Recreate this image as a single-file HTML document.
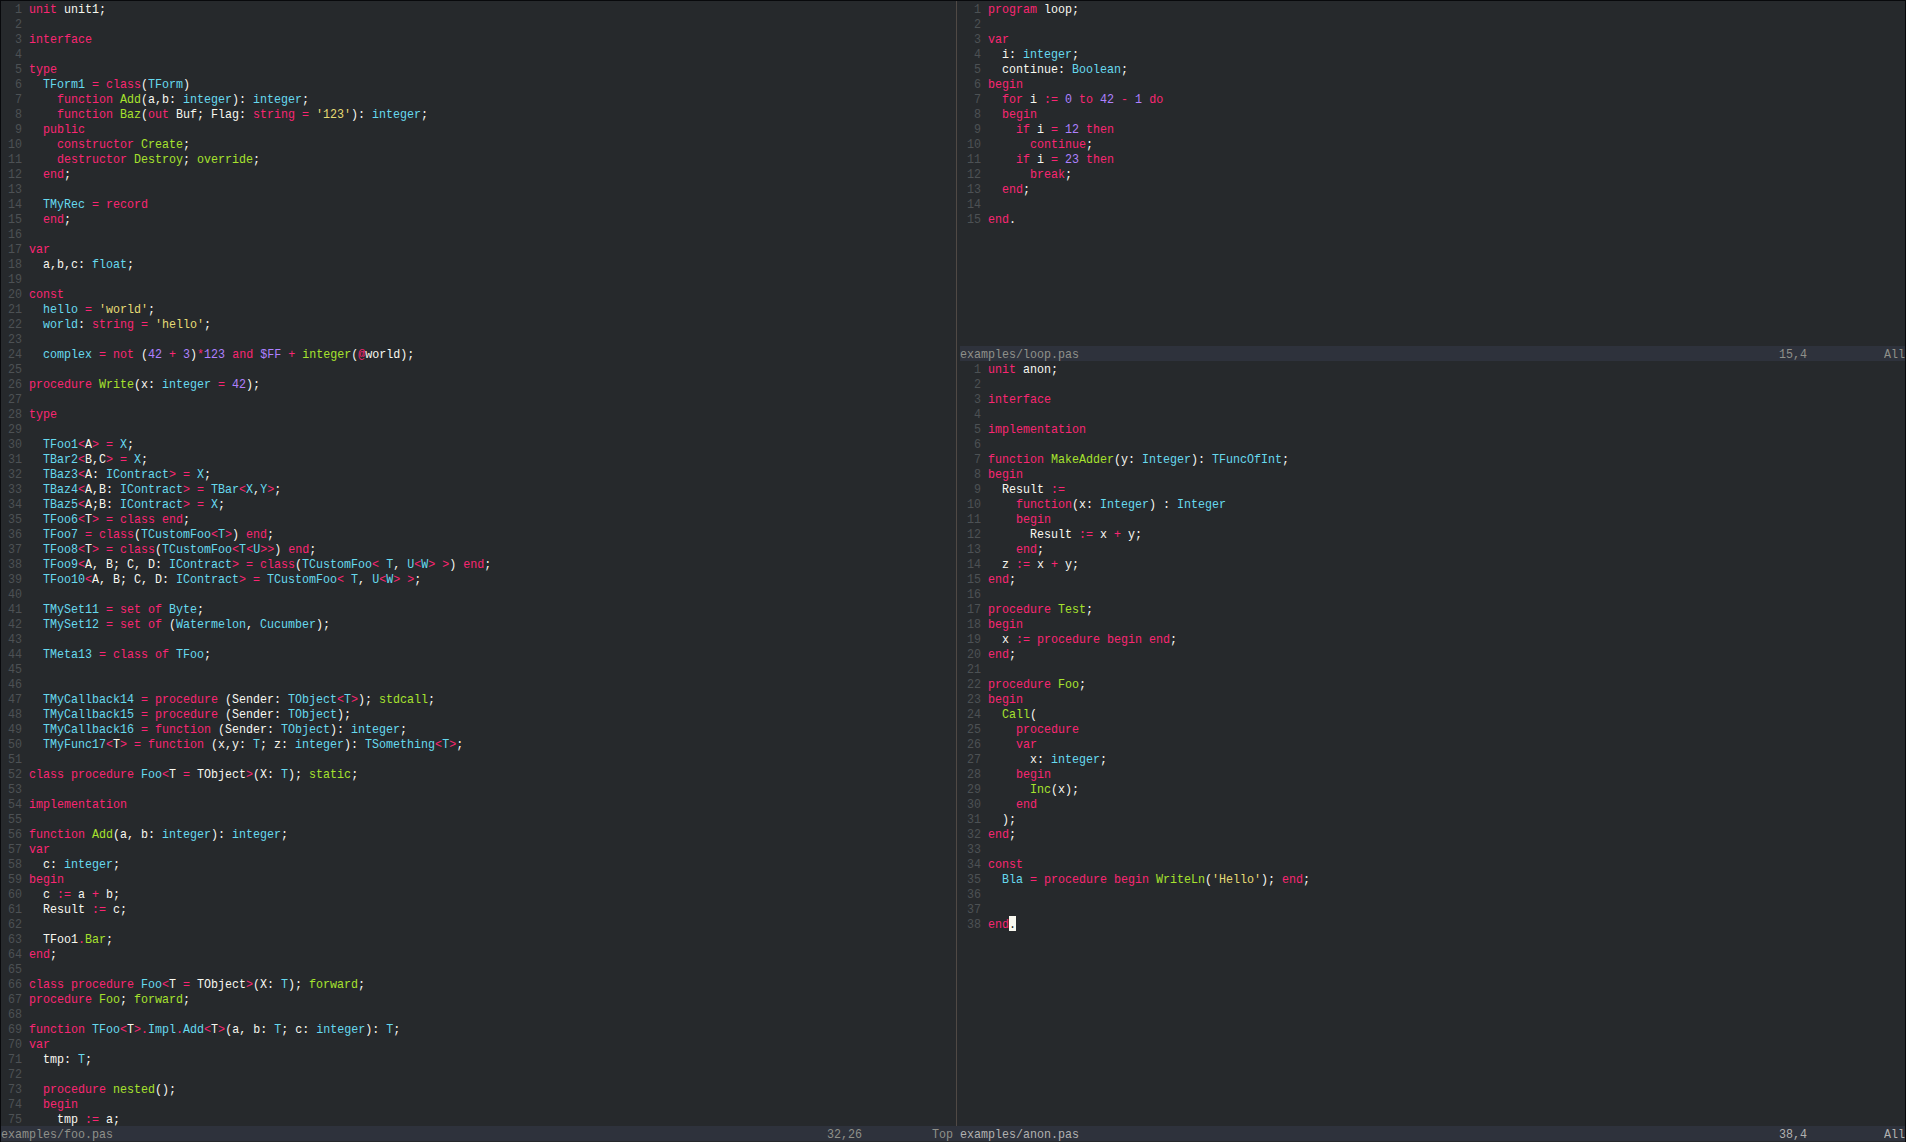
<!DOCTYPE html><html><head><meta charset="utf-8"><style>
html,body{margin:0;padding:0;}
body{width:1906px;height:1142px;background:#08090c;position:relative;overflow:hidden;}
#ed{position:absolute;left:1px;top:1px;width:1904px;height:1141px;background:#26292c;}
.blk{position:absolute;white-space:pre;font-family:"Liberation Mono",monospace;font-size:13.0px;line-height:15px;letter-spacing:0.0px;color:#f8f8f0;transform:scaleX(0.8972898541653627);transform-origin:0 0;}
.blk>*{font-style:normal;}
g{color:#4d5154;}
k{color:#f92672;} t{color:#66d9ef;} f{color:#a6e22e;} y{color:#e6db74;} n{color:#ae81ff;}
c{color:#26292c;}
.cur{position:absolute;left:1009px;top:916px;width:7px;height:15px;background:#f8f8f0;}
.sl{position:absolute;height:15px;background:#2e323c;}
.vs{position:absolute;left:956px;top:1px;width:1px;height:1125px;background:#504945;}
</style></head><body><div id="ed"></div>
<div class="vs"></div>
<div class="sl" style="left:1px;top:1126px;width:959px"></div>
<div class="sl" style="left:960px;top:1126px;width:945px"></div>
<div class="sl" style="left:960px;top:346px;width:945px"></div>
<div class="cur"></div>
<div class="blk" style="left:1px;top:2.0px"><g>  1 </g><k>unit</k> unit1;
<g>  2 </g>
<g>  3 </g><k>interface</k>
<g>  4 </g>
<g>  5 </g><k>type</k>
<g>  6 </g>  <t>TForm1</t> <k>=</k> <k>class</k>(<t>TForm</t>)
<g>  7 </g>    <k>function</k> <f>Add</f>(a,b: <t>integer</t>): <t>integer</t>;
<g>  8 </g>    <k>function</k> <f>Baz</f>(<k>out</k> Buf; Flag: <k>string</k> <k>=</k> <y>&#x27;123&#x27;</y>): <t>integer</t>;
<g>  9 </g>  <k>public</k>
<g> 10 </g>    <k>constructor</k> <f>Create</f>;
<g> 11 </g>    <k>destructor</k> <f>Destroy</f>; <f>override</f>;
<g> 12 </g>  <k>end</k>;
<g> 13 </g>
<g> 14 </g>  <t>TMyRec</t> <k>=</k> <k>record</k>
<g> 15 </g>  <k>end</k>;
<g> 16 </g>
<g> 17 </g><k>var</k>
<g> 18 </g>  a,b,c: <t>float</t>;
<g> 19 </g>
<g> 20 </g><k>const</k>
<g> 21 </g>  <t>hello</t> <k>=</k> <y>&#x27;world&#x27;</y>;
<g> 22 </g>  <t>world</t>: <k>string</k> <k>=</k> <y>&#x27;hello&#x27;</y>;
<g> 23 </g>
<g> 24 </g>  <t>complex</t> <k>=</k> <k>not</k> (<n>42</n> <k>+</k> <n>3</n>)<k>*</k><n>123</n> <k>and</k> <n>$FF</n> <k>+</k> <f>integer</f>(<k>@</k>world);
<g> 25 </g>
<g> 26 </g><k>procedure</k> <f>Write</f>(x: <t>integer</t> <k>=</k> <n>42</n>);
<g> 27 </g>
<g> 28 </g><k>type</k>
<g> 29 </g>
<g> 30 </g>  <t>TFoo1</t><k>&lt;</k>A<k>&gt;</k> <k>=</k> <t>X</t>;
<g> 31 </g>  <t>TBar2</t><k>&lt;</k>B,C<k>&gt;</k> <k>=</k> <t>X</t>;
<g> 32 </g>  <t>TBaz3</t><k>&lt;</k>A: <t>IContract</t><k>&gt;</k> <k>=</k> <t>X</t>;
<g> 33 </g>  <t>TBaz4</t><k>&lt;</k>A,B: <t>IContract</t><k>&gt;</k> <k>=</k> <t>TBar</t><k>&lt;</k><t>X</t>,<t>Y</t><k>&gt;</k>;
<g> 34 </g>  <t>TBaz5</t><k>&lt;</k>A;B: <t>IContract</t><k>&gt;</k> <k>=</k> <t>X</t>;
<g> 35 </g>  <t>TFoo6</t><k>&lt;</k>T<k>&gt;</k> <k>=</k> <k>class</k> <k>end</k>;
<g> 36 </g>  <t>TFoo7</t> <k>=</k> <k>class</k>(<t>TCustomFoo</t><k>&lt;</k><t>T</t><k>&gt;</k>) <k>end</k>;
<g> 37 </g>  <t>TFoo8</t><k>&lt;</k>T<k>&gt;</k> <k>=</k> <k>class</k>(<t>TCustomFoo</t><k>&lt;</k><t>T</t><k>&lt;</k><t>U</t><k>&gt;&gt;</k>) <k>end</k>;
<g> 38 </g>  <t>TFoo9</t><k>&lt;</k>A, B; C, D: <t>IContract</t><k>&gt;</k> <k>=</k> <k>class</k>(<t>TCustomFoo</t><k>&lt;</k> <t>T</t>, <t>U</t><k>&lt;</k><t>W</t><k>&gt;</k> <k>&gt;</k>) <k>end</k>;
<g> 39 </g>  <t>TFoo10</t><k>&lt;</k>A, B; C, D: <t>IContract</t><k>&gt;</k> <k>=</k> <t>TCustomFoo</t><k>&lt;</k> <t>T</t>, <t>U</t><k>&lt;</k><t>W</t><k>&gt;</k> <k>&gt;</k>;
<g> 40 </g>
<g> 41 </g>  <t>TMySet11</t> <k>=</k> <k>set</k> <k>of</k> <t>Byte</t>;
<g> 42 </g>  <t>TMySet12</t> <k>=</k> <k>set</k> <k>of</k> (<t>Watermelon</t>, <t>Cucumber</t>);
<g> 43 </g>
<g> 44 </g>  <t>TMeta13</t> <k>=</k> <k>class</k> <k>of</k> <t>TFoo</t>;
<g> 45 </g>
<g> 46 </g>
<g> 47 </g>  <t>TMyCallback14</t> <k>=</k> <k>procedure</k> (Sender: <t>TObject</t><k>&lt;</k><t>T</t><k>&gt;</k>); <f>stdcall</f>;
<g> 48 </g>  <t>TMyCallback15</t> <k>=</k> <k>procedure</k> (Sender: <t>TObject</t>);
<g> 49 </g>  <t>TMyCallback16</t> <k>=</k> <k>function</k> (Sender: <t>TObject</t>): <t>integer</t>;
<g> 50 </g>  <t>TMyFunc17</t><k>&lt;</k>T<k>&gt;</k> <k>=</k> <k>function</k> (x,y: <t>T</t>; z: <t>integer</t>): <t>TSomething</t><k>&lt;</k><t>T</t><k>&gt;</k>;
<g> 51 </g>
<g> 52 </g><k>class</k> <k>procedure</k> <t>Foo</t><k>&lt;</k>T <k>=</k> TObject<k>&gt;</k>(X: <t>T</t>); <f>static</f>;
<g> 53 </g>
<g> 54 </g><k>implementation</k>
<g> 55 </g>
<g> 56 </g><k>function</k> <f>Add</f>(a, b: <t>integer</t>): <t>integer</t>;
<g> 57 </g><k>var</k>
<g> 58 </g>  c: <t>integer</t>;
<g> 59 </g><k>begin</k>
<g> 60 </g>  c <k>:=</k> a <k>+</k> b;
<g> 61 </g>  Result <k>:=</k> c;
<g> 62 </g>
<g> 63 </g>  TFoo1<k>.</k><f>Bar</f>;
<g> 64 </g><k>end</k>;
<g> 65 </g>
<g> 66 </g><k>class</k> <k>procedure</k> <t>Foo</t><k>&lt;</k>T <k>=</k> TObject<k>&gt;</k>(X: <t>T</t>); <f>forward</f>;
<g> 67 </g><k>procedure</k> <f>Foo</f>; <f>forward</f>;
<g> 68 </g>
<g> 69 </g><k>function</k> <t>TFoo</t><k>&lt;</k>T<k>&gt;.</k><t>Impl</t><k>.</k><t>Add</t><k>&lt;</k>T<k>&gt;</k>(a, b: <t>T</t>; c: <t>integer</t>): <t>T</t>;
<g> 70 </g><k>var</k>
<g> 71 </g>  tmp: <t>T</t>;
<g> 72 </g>
<g> 73 </g>  <k>procedure</k> <f>nested</f>();
<g> 74 </g>  <k>begin</k>
<g> 75 </g>    tmp <k>:=</k> a;</div>
<div class="blk" style="left:960px;top:2.0px"><g>  1 </g><k>program</k> loop;
<g>  2 </g>
<g>  3 </g><k>var</k>
<g>  4 </g>  i: <t>integer</t>;
<g>  5 </g>  continue: <t>Boolean</t>;
<g>  6 </g><k>begin</k>
<g>  7 </g>  <k>for</k> i <k>:=</k> <n>0</n> <k>to</k> <n>42</n> <k>-</k> <n>1</n> <k>do</k>
<g>  8 </g>  <k>begin</k>
<g>  9 </g>    <k>if</k> i <k>=</k> <n>12</n> <k>then</k>
<g> 10 </g>      <k>continue</k>;
<g> 11 </g>    <k>if</k> i <k>=</k> <n>23</n> <k>then</k>
<g> 12 </g>      <k>break</k>;
<g> 13 </g>  <k>end</k>;
<g> 14 </g>
<g> 15 </g><k>end</k>.</div>
<div class="blk" style="left:960px;top:362.0px"><g>  1 </g><k>unit</k> anon;
<g>  2 </g>
<g>  3 </g><k>interface</k>
<g>  4 </g>
<g>  5 </g><k>implementation</k>
<g>  6 </g>
<g>  7 </g><k>function</k> <f>MakeAdder</f>(y: <t>Integer</t>): <t>TFuncOfInt</t>;
<g>  8 </g><k>begin</k>
<g>  9 </g>  Result <k>:=</k>
<g> 10 </g>    <k>function</k>(x: <t>Integer</t>) : <t>Integer</t>
<g> 11 </g>    <k>begin</k>
<g> 12 </g>      Result <k>:=</k> x <k>+</k> y;
<g> 13 </g>    <k>end</k>;
<g> 14 </g>  z <k>:=</k> x <k>+</k> y;
<g> 15 </g><k>end</k>;
<g> 16 </g>
<g> 17 </g><k>procedure</k> <f>Test</f>;
<g> 18 </g><k>begin</k>
<g> 19 </g>  x <k>:=</k> <k>procedure</k> <k>begin</k> <k>end</k>;
<g> 20 </g><k>end</k>;
<g> 21 </g>
<g> 22 </g><k>procedure</k> <f>Foo</f>;
<g> 23 </g><k>begin</k>
<g> 24 </g>  <f>Call</f>(
<g> 25 </g>    <k>procedure</k>
<g> 26 </g>    <k>var</k>
<g> 27 </g>      x: <t>integer</t>;
<g> 28 </g>    <k>begin</k>
<g> 29 </g>      <f>Inc</f>(x);
<g> 30 </g>    <k>end</k>
<g> 31 </g>  );
<g> 32 </g><k>end</k>;
<g> 33 </g>
<g> 34 </g><k>const</k>
<g> 35 </g>  <t>Bla</t> <k>=</k> <k>procedure</k> <k>begin</k> <f>WriteLn</f>(<y>&#x27;Hello&#x27;</y>); <k>end</k>;
<g> 36 </g>
<g> 37 </g>
<g> 38 </g><k>end</k><c>.</c></div>
<div class="blk" style="left:1px;top:1127.0px;color:#8f908a">examples/foo.pas</div>
<div class="blk" style="left:827px;top:1127.0px;color:#8f908a">32,26</div>
<div class="blk" style="left:932px;top:1127.0px;color:#8f908a">Top</div>
<div class="blk" style="left:960px;top:347.0px;color:#8f908a">examples/loop.pas</div>
<div class="blk" style="left:1779px;top:347.0px;color:#8f908a">15,4</div>
<div class="blk" style="left:1884px;top:347.0px;color:#8f908a">All</div>
<div class="blk" style="left:960px;top:1127.0px;color:#b1b1b1">examples/anon.pas</div>
<div class="blk" style="left:1779px;top:1127.0px;color:#b1b1b1">38,4</div>
<div class="blk" style="left:1884px;top:1127.0px;color:#b1b1b1">All</div></body></html>
